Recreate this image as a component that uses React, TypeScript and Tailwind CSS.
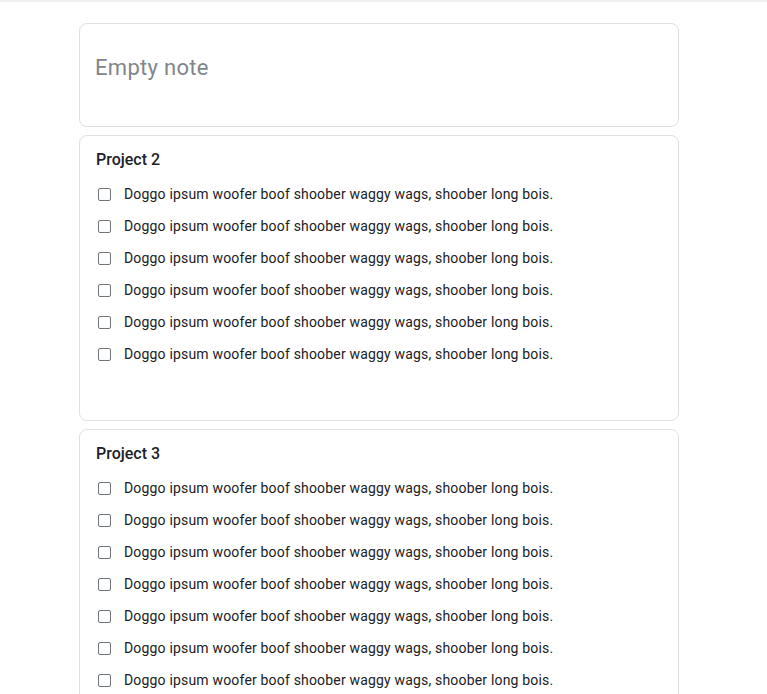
import React from 'react'

const ITEM = 'Doggo ipsum woofer boof shoober waggy wags, shoober long bois.'

interface NoteCardProps {
  title: string
  items: string[]
}

const CheckItem: React.FC<{ text: string }> = ({ text }) => (
  <div className="flex items-center h-[32px]">
    <span className="ml-[2px] w-[13px] h-[13px] border-[1.5px] border-[#70757a] rounded-[2px] shrink-0" />
    <span className="ml-[13px] text-[14px] text-[#202124] tracking-[0.18px]">{text}</span>
  </div>
)

const NoteCard: React.FC<NoteCardProps> = ({ title, items }) => (
  <div className="border border-[#e0e0e0] rounded-[8px] bg-white pt-[14px] pb-[50px] px-[16px]">
    <h3 className="text-[16px] font-medium text-[#202124] leading-[20px] mb-[8px]">{title}</h3>
    <div>
      {items.map((text, i) => (
        <CheckItem key={i} text={text} />
      ))}
    </div>
  </div>
)

export default function App() {
  return (
    <div className="min-h-screen bg-white font-['Roboto',sans-serif]">
      <div className="h-[2px] bg-[#f0f0f0]" />
      <div className="ml-[79px] w-[600px] pt-[21px] flex flex-col gap-[8px]">
        <div className="border border-[#e0e0e0] rounded-[8px] h-[104px] px-[15px] pt-[30px]">
          <p className="text-[22px] text-[#80868b] leading-[28px] tracking-[0.3px]">Empty note</p>
        </div>
        <NoteCard title="Project 2" items={Array(6).fill(ITEM)} />
        <NoteCard title="Project 3" items={Array(7).fill(ITEM)} />
      </div>
    </div>
  )
}
